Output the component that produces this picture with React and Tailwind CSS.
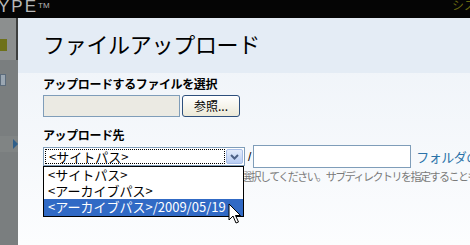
const jp = { fontFamily: '"Noto Sans CJK JP", "Noto Sans", sans-serif' }

const Cursor = () => (
  <svg width="14" height="22" viewBox="0 0 14 22" className="absolute left-[228px] top-[203px]">
    <path d="M1 1 L1 17 L5 13 L8 20 L10.5 19 L7.5 12.5 L12.5 12.5 Z" fill="#fff" stroke="#000" strokeWidth="1" strokeLinejoin="miter" />
  </svg>
)

const Chevron = () => (
  <svg width="9" height="6" viewBox="0 0 9 6">
    <path d="M1 1 L4.5 4.5 L8 1" fill="none" stroke="#4d6185" strokeWidth="2" />
  </svg>
)

export default function App() {
  return (
    <div className="relative w-[470px] h-[245px] overflow-hidden bg-black" style={jp}>
      {/* top bar */}
      <div className="h-[18px] bg-[#050505] flex items-start justify-between">
        <span className="-ml-[2px] -mt-[2px] text-[17px] leading-[18px] tracking-[2px] text-[#b8b8b8]" style={{ fontFamily: '"Liberation Sans", sans-serif' }}>
          YPE<sup className="text-[8px] tracking-normal">TM</sup>
        </span>
        <span className="mr-[-6px] -mt-[4px] text-[12px] text-[#6b6a10]">シス</span>
      </div>

      <div className="flex h-[227px]">
        {/* left strip */}
        <div className="w-[18px] shrink-0 flex flex-col">
          <div className="h-[42px] bg-[#8c8f8f] border-r-2 border-[#3d3f3f] flex flex-col">
            <div className="mt-[21px] w-[7px] h-[12px] bg-[#6e7119]" />
          </div>
          <div className="flex-1 bg-[#7a7e7f] flex flex-col">
            <div className="mt-[14px] w-[6px] h-[12px] bg-[#9aa6b2] border border-[#5b6b7b]" />
            <div className="mt-[50px] h-[16px] bg-[#808484] flex items-center justify-end">
              <div className="w-0 h-0 border-y-[5px] border-y-transparent border-r-[5px] border-r-[#2f5f8a] rotate-180" />
            </div>
          </div>
        </div>

        {/* dialog */}
        <div className="relative flex-1 min-w-0 overflow-hidden flex flex-col bg-gradient-to-b from-[#edf2f8] to-[#fcfdfe]">
          <div className="h-[55px] shrink-0 bg-[#e4ecf5] pl-[25px] pt-[11px]">
            <h1 className="text-[22px] leading-[28px] tracking-[-0.3px] text-black">ファイルアップロード</h1>
          </div>

          <div className="pl-[25px] pt-[2px] flex flex-col">
            <div className="text-[12px] leading-[18px] font-bold text-black tracking-[-0.4px]">アップロードするファイルを選択</div>
            <div className="mt-[2px] flex items-center gap-[2px]">
              <div className="w-[137px] h-[22px] shrink-0 bg-[#ebeae3] border border-[#7f9db9]" />
              <button className="w-[58px] h-[22px] shrink-0 rounded-[3px] border border-[#2d4f7c] bg-gradient-to-b from-white to-[#ece9d8] text-[12px] leading-[18px] text-black">
                参照...
              </button>
            </div>

            <div className="mt-[9px] text-[12px] leading-[18px] font-bold text-black tracking-[-0.4px]">アップロード先</div>
            <div className="mt-[1px] flex items-center">
              <div className="w-[202px] h-[19px] shrink-0 bg-white border border-[#7f9db9] flex items-center p-[1px]">
                <div className="flex-1 h-full border border-dotted border-black text-[13px] leading-[14px] pl-[3px] text-black">&lt;サイトパス&gt;</div>
                <div className="w-[17px] h-full ml-[1px] rounded-[2px] border border-[#a7bde6] bg-gradient-to-b from-[#e4ecfb] to-[#b8cdf4] flex items-center justify-center">
                  <Chevron />
                </div>
              </div>
              <span className="ml-[3px] mr-[2px] shrink-0 text-[12px] text-black" style={{ fontFamily: '"Liberation Sans", sans-serif' }}>/</span>
              <div className="w-[158px] h-[23px] shrink-0 bg-white border border-[#7f9db9]" />
              <span className="ml-[5px] shrink-0 text-[13px] leading-[18px] text-[#2a72a8] whitespace-nowrap tracking-[-0.5px]">フォルダの参照</span>
            </div>
            <div className="mt-[1px] ml-[160px] text-[11px] leading-[15px] text-[#7a7a7a] whitespace-nowrap tracking-[-1.5px]">
              ださい。選択してください。サブディレクトリを指定することもできます
            </div>
          </div>

          {/* dropdown list */}
          <div className="absolute left-[25px] top-[148px] w-[201px] bg-white border border-black text-[13px] leading-[16px] text-black">
            <div className="h-[16px] pl-[4px]">&lt;サイトパス&gt;</div>
            <div className="h-[16px] pl-[4px]">&lt;アーカイブパス&gt;</div>
            <div className="h-[17px] pl-[4px] bg-[#316ac5] text-white">&lt;アーカイブパス&gt;/2009/05/19</div>
          </div>
        </div>
      </div>

      <Cursor />
    </div>
  )
}
